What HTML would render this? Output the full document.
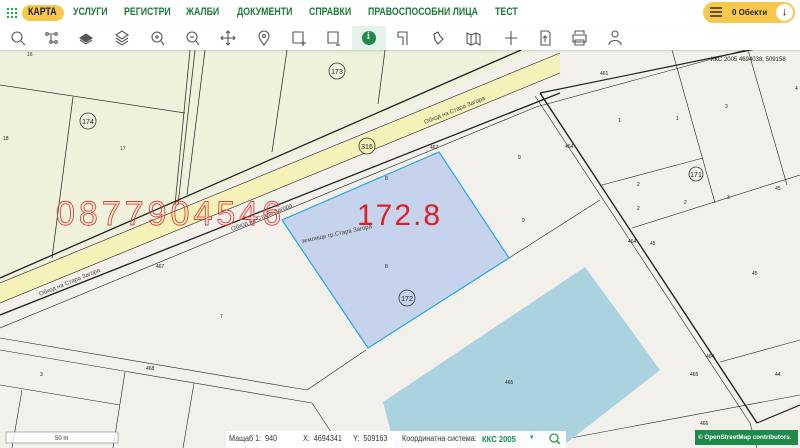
<!DOCTYPE html>
<html><head><meta charset="utf-8"><style>
*{margin:0;padding:0;box-sizing:border-box}
body{width:800px;height:448px;overflow:hidden;font-family:"Liberation Sans",sans-serif;background:#f2f0eb;position:relative}
#hdr{position:absolute;left:0;top:0;width:800px;height:26px;background:#fff;}
#hdr .nav{position:absolute;top:6px;font-size:11px;font-weight:bold;color:#1f7a3a;transform:scaleX(0.8);transform-origin:left top;white-space:nowrap}
#tb{position:absolute;left:0;top:26px;width:800px;height:24px;background:#fff;box-shadow:0 1px 2px rgba(0,0,0,.15)}
svg text{font-family:"Liberation Sans",sans-serif}
.sb{position:absolute;top:0;white-space:nowrap;transform:scaleX(0.9);transform-origin:left top}
</style></head><body>
<svg style="position:absolute;left:0;top:0" width="800" height="448">
<rect width="800" height="448" fill="#f2f0eb"/>
<polygon points="0,50 540,50 0,283" fill="#eef2da"/>
<g stroke="#333" stroke-width="0.8" fill="none">
<line x1="0" y1="85" x2="185" y2="113"/>
<line x1="73" y1="97" x2="52" y2="258"/>
<line x1="195" y1="50" x2="178" y2="205"/>
<line x1="190" y1="50" x2="175" y2="205"/>
<line x1="205" y1="50" x2="187" y2="195"/>
<line x1="287" y1="50" x2="272" y2="152"/>
<line x1="385" y1="50" x2="378" y2="104"/>
</g>
<polygon points="0,283 560,53 560,73 0,303" fill="#f4f2b8"/>
<g stroke="#222" fill="none">
<line x1="0" y1="278" x2="521" y2="50" stroke-width="1.3"/>
<line x1="0" y1="283" x2="560" y2="53" stroke-width="0.6"/>
<line x1="0" y1="303" x2="560" y2="73" stroke-width="0.6"/>
<line x1="0" y1="315" x2="560" y2="93" stroke-width="1.3"/>
<line x1="0" y1="328" x2="536" y2="107" stroke-width="0.6"/>
<line x1="536" y1="107" x2="800" y2="35" stroke-width="0.6"/>
<line x1="540" y1="93" x2="757" y2="423" stroke-width="1.4"/>
<line x1="535" y1="96" x2="750" y2="423" stroke-width="0.6"/>
<line x1="750" y1="423" x2="757" y2="448" stroke-width="0.6"/>
<line x1="757" y1="423" x2="800" y2="405" stroke-width="1.2"/>
<line x1="540" y1="93" x2="800" y2="40" stroke-width="1.2"/>
<line x1="672" y1="50" x2="715" y2="203" stroke-width="0.6"/>
<line x1="748" y1="50" x2="787" y2="185" stroke-width="0.6"/>
<line x1="602" y1="185" x2="703" y2="158" stroke-width="0.6"/>
<line x1="632" y1="228" x2="800" y2="175" stroke-width="0.6"/>
<line x1="509" y1="258" x2="600" y2="200" stroke-width="0.6"/>
<line x1="720" y1="362" x2="800" y2="340" stroke-width="0.6"/>
<line x1="0" y1="338" x2="307" y2="390" stroke-width="0.6"/>
<line x1="0" y1="350" x2="312" y2="403" stroke-width="0.6"/>
<line x1="307" y1="390" x2="366" y2="350" stroke-width="0.6"/>
<line x1="312" y1="403" x2="333" y2="435" stroke-width="0.6"/>
<line x1="0" y1="385" x2="120" y2="405" stroke-width="0.6"/>
<line x1="22" y1="390" x2="12" y2="448" stroke-width="0.6"/>
<line x1="125" y1="372" x2="113" y2="448" stroke-width="0.6"/>
<line x1="194" y1="383" x2="183" y2="448" stroke-width="0.6"/>
<line x1="560" y1="440" x2="800" y2="395" stroke-width="0.6"/>
</g>
<polygon points="383,402 585,267 660,370 560,448 395,448" fill="#aad3df"/>
<polygon points="282,220 439,152 509,258 368,348" fill="#c5d3ec" stroke="#2aa6e0" stroke-width="1.2"/>
<g font-size="5" fill="#222">
<text x="27" y="56">16</text><text x="3" y="140">18</text><text x="120" y="150">17</text><text x="430" y="149">467</text>
<text x="385" y="180">8</text><text x="385" y="268">8</text><text x="518" y="159">9</text><text x="522" y="222">9</text>
<text x="220" y="318">7</text><text x="156" y="268">467</text><text x="40" y="376">3</text><text x="146" y="370">468</text>
<text x="600" y="75">461</text><text x="618" y="122">1</text><text x="676" y="120">1</text><text x="725" y="108">3</text>
<text x="637" y="186">2</text><text x="637" y="210">2</text><text x="684" y="204">2</text><text x="727" y="199">3</text>
<text x="650" y="245">45</text><text x="752" y="275">45</text><text x="775" y="190">45</text><text x="775" y="376">44</text>
<text x="690" y="376">465</text><text x="505" y="384">465</text><text x="700" y="425">466</text><text x="565" y="148">464</text>
<text x="628" y="243">464</text><text x="706" y="358">464</text><text x="795" y="90">4</text>
<text x="711" y="61" font-size="6">ККС 2005 4694038, 509158</text>
</g>
<g fill="none" stroke="#333" stroke-width="0.8">
<circle cx="337" cy="71" r="8"/><circle cx="88" cy="121" r="8"/><circle cx="407" cy="298" r="8"/><circle cx="696" cy="174" r="7"/>
<circle cx="367" cy="146" r="8" fill="#f4f2b8"/>
</g>
<g font-size="7" fill="#222" text-anchor="middle">
<text x="337" y="74">173</text><text x="88" y="124">174</text><text x="407" y="301">172</text><text x="696" y="177">171</text><text x="367" y="149">316</text>
</g>
<g font-size="6" fill="#444">
<text transform="translate(40,296) rotate(-22)">Обход на Стара Загора</text>
<text transform="translate(232,231) rotate(-22)">Обход на Стара Загора</text>
<text transform="translate(425,124) rotate(-22)">Обход на Стара Загора</text>
<text transform="translate(302,243) rotate(-12)">землище гр.Стара Загора</text>
</g>
<text x="56" y="225" font-size="34" fill="none" stroke="#e0403a" stroke-width="0.9" letter-spacing="4">0877904546</text>
<text x="357" y="225" font-size="30" fill="#e02020" letter-spacing="2">172.8</text>
<rect x="6" y="432" width="112" height="11" fill="#fff" fill-opacity=".8" stroke="#888" stroke-width=".6"/>
<text x="55" y="440" font-size="6" fill="#333">50 m</text>
</svg>

<div id="hdr">
<svg style="position:absolute;left:6px;top:7px" width="12" height="12"><g fill="#2a9a4a">
<circle cx="2" cy="2" r="1.2"/><circle cx="6" cy="2" r="1.2"/><circle cx="10" cy="2" r="1.2"/>
<circle cx="2" cy="6" r="1.2"/><circle cx="6" cy="6" r="1.2"/><circle cx="10" cy="6" r="1.2"/>
<circle cx="2" cy="10" r="1.2"/><circle cx="6" cy="10" r="1.2"/><circle cx="10" cy="10" r="1.2"/></g></svg>
<div style="position:absolute;left:22px;top:5px;width:42px;height:16px;background:#f6c94d;border-radius:8px"></div>
<span class="nav" style="left:28px;color:#222">КАРТА</span>
<span class="nav" style="left:73px">УСЛУГИ</span>
<span class="nav" style="left:124px">РЕГИСТРИ</span>
<span class="nav" style="left:186px">ЖАЛБИ</span>
<span class="nav" style="left:237px">ДОКУМЕНТИ</span>
<span class="nav" style="left:309px">СПРАВКИ</span>
<span class="nav" style="left:368px">ПРАВОСПОСОБНИ ЛИЦА</span>
<span class="nav" style="left:495px">ТЕСТ</span>
<div style="position:absolute;left:703px;top:2px;width:92px;height:21px;background:#f6c94d;border-radius:11px"></div>
<svg style="position:absolute;left:710px;top:7px" width="12" height="10"><g stroke="#222" stroke-width="1.4"><line x1="0" y1="1" x2="12" y2="1"/><line x1="0" y1="5" x2="12" y2="5"/><line x1="0" y1="9" x2="12" y2="9"/></g></svg>
<span style="position:absolute;left:732px;top:8px;font-size:8px;font-weight:bold;color:#222">0 Обекти</span>
<div style="position:absolute;left:776px;top:4px;width:17px;height:17px;background:#fff;border-radius:50%;text-align:center;font-size:11px;line-height:17px;font-weight:bold">↓</div>
</div>

<div id="tb">
<div style="position:absolute;left:352px;top:0;width:34px;height:24px;background:#e4f2ea"></div>
<svg width="800" height="24" style="position:absolute;left:0;top:0" fill="none" stroke="#555" stroke-width="1.1">
<circle cx="17" cy="11" r="5"/><line x1="21" y1="15" x2="25" y2="19"/>
<g transform="translate(46,6)"><circle cx="1" cy="2" r="1.3"/><circle cx="10" cy="2" r="1.3"/><circle cx="5" cy="10" r="1.3"/><circle cx="10" cy="10" r="1.3"/><path d="M2 2h7M5 3v6M6 10h3"/></g>
<path d="M80 12l6-4 6 4-6 4z" fill="#555"/><path d="M80 14l6 4 6-4"/>
<path d="M116 9l6-4 6 4-6 4z M116 12l6 4 6-4 M116 15l6 4 6-4"/>
<circle cx="157" cy="11" r="5"/><line x1="161" y1="15" x2="164" y2="19"/><path d="M155 11h4M157 9v4"/>
<circle cx="192" cy="11" r="5"/><line x1="196" y1="15" x2="199" y2="19"/><path d="M190 11h4"/>
<path d="M228 5v14M221 12h14M226 7l2-2 2 2M226 17l2 2 2-2M223 10l-2 2 2 2M233 10l2 2-2 2"/>
<path d="M264 19c-4-5-5-7-5-9a5 5 0 0 1 10 0c0 2-1 4-5 9z"/><circle cx="264" cy="10" r="1.5"/>
<path d="M293 6h10v11M293 6v11h10"/><path d="M301 17h5M303 15v5" stroke-width="1.3"/>
<path d="M328 6h10v11h-10z"/><path d="M336 19h4" stroke-width="1.3"/>
<path d="M398 6h9v13M398 6v5h5v8"/>
<path d="M434 8l4-2 2 4 3 3-5 5-3-4z"/>
<path d="M467 7l4 2 5-2 4 2v10l-4-2-5 2-4-2z M471 9v10 M476 7v10"/>
<path d="M511 5v14M505 12h12"/>
<path d="M541 5h7l2 2v12h-9z M545 16v-6M543 12l2-2 2 2"/>
<path d="M575 8v-3h9v3M573 9h13v7h-13z M575 14h9v5h-9z"/>
<circle cx="615" cy="8" r="3"/><path d="M609 19c0-6 12-6 12 0"/>
<circle cx="369" cy="12" r="7" fill="#1f8a4c" stroke="none"/>
</svg>
<span style="position:absolute;left:367px;top:5px;color:#fff;font-size:10px;font-weight:bold;font-family:'Liberation Serif',serif">i</span>
</div>

<div style="position:absolute;left:226px;top:431px;width:340px;height:17px;background:#fff;opacity:.95"></div>
<div style="position:absolute;left:229px;top:434px;font-size:8px;color:#333">
<span class="sb" style="left:0">Мащаб 1:&nbsp; 940</span>
<span class="sb" style="left:74px">X:&nbsp; 4694341</span>
<span class="sb" style="left:124px">Y:&nbsp; 509163</span>
<span class="sb" style="left:173px">Координатна система:</span>
<span class="sb" style="left:253px;color:#1f8a4c;font-weight:bold;font-size:8.5px">ККС 2005</span>
<span class="sb" style="left:300px;color:#1f8a4c;font-size:6px;top:1px">▼</span>
</div>
<svg style="position:absolute;left:549px;top:433px" width="12" height="12" fill="none" stroke="#2a9a4a" stroke-width="1.3"><circle cx="5" cy="5" r="4"/><line x1="8" y1="8" x2="11" y2="11"/></svg>
<div style="position:absolute;left:695px;top:430px;width:103px;height:15px;background:#1f8a4c;color:#fff;font-size:6.3px;font-weight:bold;line-height:15px;padding-left:3px;white-space:nowrap;overflow:hidden">© OpenStreetMap contributors.</div>
</body></html>
